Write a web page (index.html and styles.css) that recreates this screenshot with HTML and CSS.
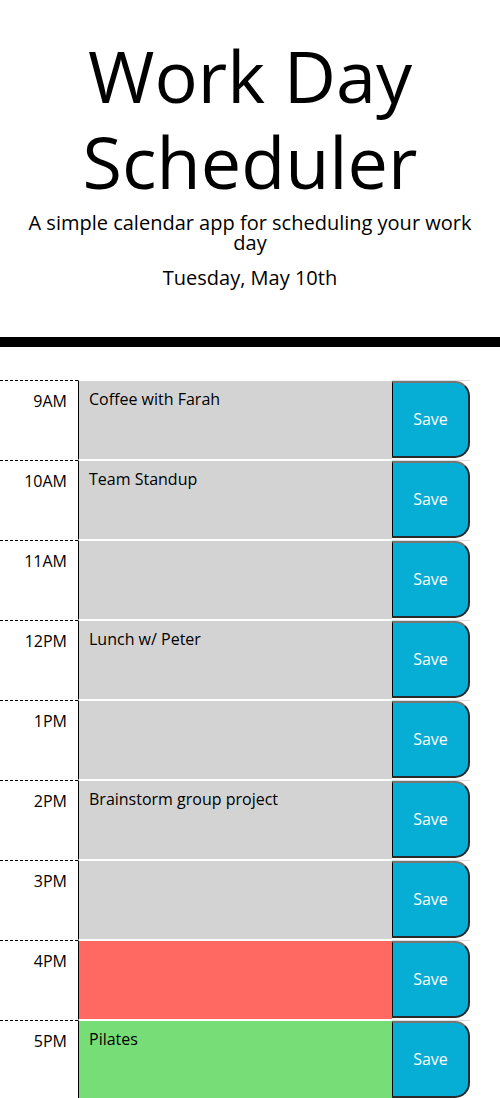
FILE: index.html
```html
<!DOCTYPE html>
<html lang="en">
<head>
<meta charset="utf-8">
<title>Work Day Scheduler</title>
<link rel="stylesheet" href="styles.css">
</head>
<body>
<header class="jumbotron">
  <h1 class="title">Work Day Scheduler</h1>
  <p class="lead">A simple calendar app for scheduling your work day</p>
  <p class="current-day">Tuesday, May 10th</p>
</header>
<main class="container">
  <div class="time-block">
    <div class="hour">9AM</div>
    <textarea class="description past">Coffee with Farah</textarea>
    <div class="btn-cell"><button class="saveBtn">Save</button></div>
  </div>
  <div class="time-block">
    <div class="hour">10AM</div>
    <textarea class="description past">Team Standup</textarea>
    <div class="btn-cell"><button class="saveBtn">Save</button></div>
  </div>
  <div class="time-block">
    <div class="hour">11AM</div>
    <textarea class="description past"></textarea>
    <div class="btn-cell"><button class="saveBtn">Save</button></div>
  </div>
  <div class="time-block">
    <div class="hour">12PM</div>
    <textarea class="description past">Lunch w/ Peter</textarea>
    <div class="btn-cell"><button class="saveBtn">Save</button></div>
  </div>
  <div class="time-block">
    <div class="hour">1PM</div>
    <textarea class="description past"></textarea>
    <div class="btn-cell"><button class="saveBtn">Save</button></div>
  </div>
  <div class="time-block">
    <div class="hour">2PM</div>
    <textarea class="description past">Brainstorm group project</textarea>
    <div class="btn-cell"><button class="saveBtn">Save</button></div>
  </div>
  <div class="time-block">
    <div class="hour">3PM</div>
    <textarea class="description past"></textarea>
    <div class="btn-cell"><button class="saveBtn">Save</button></div>
  </div>
  <div class="time-block">
    <div class="hour">4PM</div>
    <textarea class="description present"></textarea>
    <div class="btn-cell"><button class="saveBtn">Save</button></div>
  </div>
  <div class="time-block">
    <div class="hour">5PM</div>
    <textarea class="description future">Pilates</textarea>
    <div class="btn-cell"><button class="saveBtn">Save</button></div>
  </div>
</main>
</body>
</html>
```

FILE: styles.css
```css
html, body {
  margin: 0;
  padding: 0;
  background: #ffffff;
}

body {
  font-family: "Open Sans", "Noto Sans", sans-serif;
  color: #000000;
  font-size: 16px;
  line-height: 1.5;
}

.jumbotron {
  text-align: center;
  padding: 32px 15px 44px;
  border-bottom: 10px solid #000000;
}

.title {
  margin: 0;
  font-size: 72px;
  font-weight: 400;
  line-height: 1.2;
}

.lead {
  margin: 8px 0 0;
  font-size: 20px;
  line-height: 20px;
}

.current-day {
  margin: 10px 0 0;
  font-size: 20px;
  line-height: 30px;
}

.container {
  width: 470px;
  margin-top: 33px;
}

.time-block {
  display: flex;
  height: 80px;
}

.hour {
  width: 78px;
  box-sizing: border-box;
  border-top: 1px dashed #000000;
  padding: 8px 11px 0 0;
  text-align: right;
  font-size: 16px;
  line-height: 24px;
}

.description {
  width: 314px;
  height: 80px;
  box-sizing: border-box;
  margin: 0;
  border: none;
  border-left: 1px solid #000000;
  border-top: 1px solid #ffffff;
  border-bottom: 1px solid #ffffff;
  padding: 6px 10px;
  resize: none;
  outline: none;
  font-family: "Open Sans", "Noto Sans", sans-serif;
  font-size: 16px;
  line-height: 24px;
  color: #000000;
  overflow: hidden;
}

.past { background-color: #d3d3d3; }
.present { background-color: #ff6961; }
.future { background-color: #77dd77; }

.btn-cell {
  width: 78px;
  height: 80px;
  box-sizing: border-box;
  border-top: 1px solid #dfdfdf;
  padding-bottom: 2px;
  display: flex;
}

.saveBtn {
  flex: 1;
  margin: 0;
  background-color: #06aed5;
  color: #ffffff;
  font-family: "Open Sans", "Noto Sans", sans-serif;
  font-size: 16px;
  border-top: 2px solid #767676;
  border-right: 2px solid #2a2a2a;
  border-bottom: 2px solid #2a2a2a;
  border-left: 1px solid #000000;
  border-radius: 0 15px 15px 0;
  padding: 0;
}
```
